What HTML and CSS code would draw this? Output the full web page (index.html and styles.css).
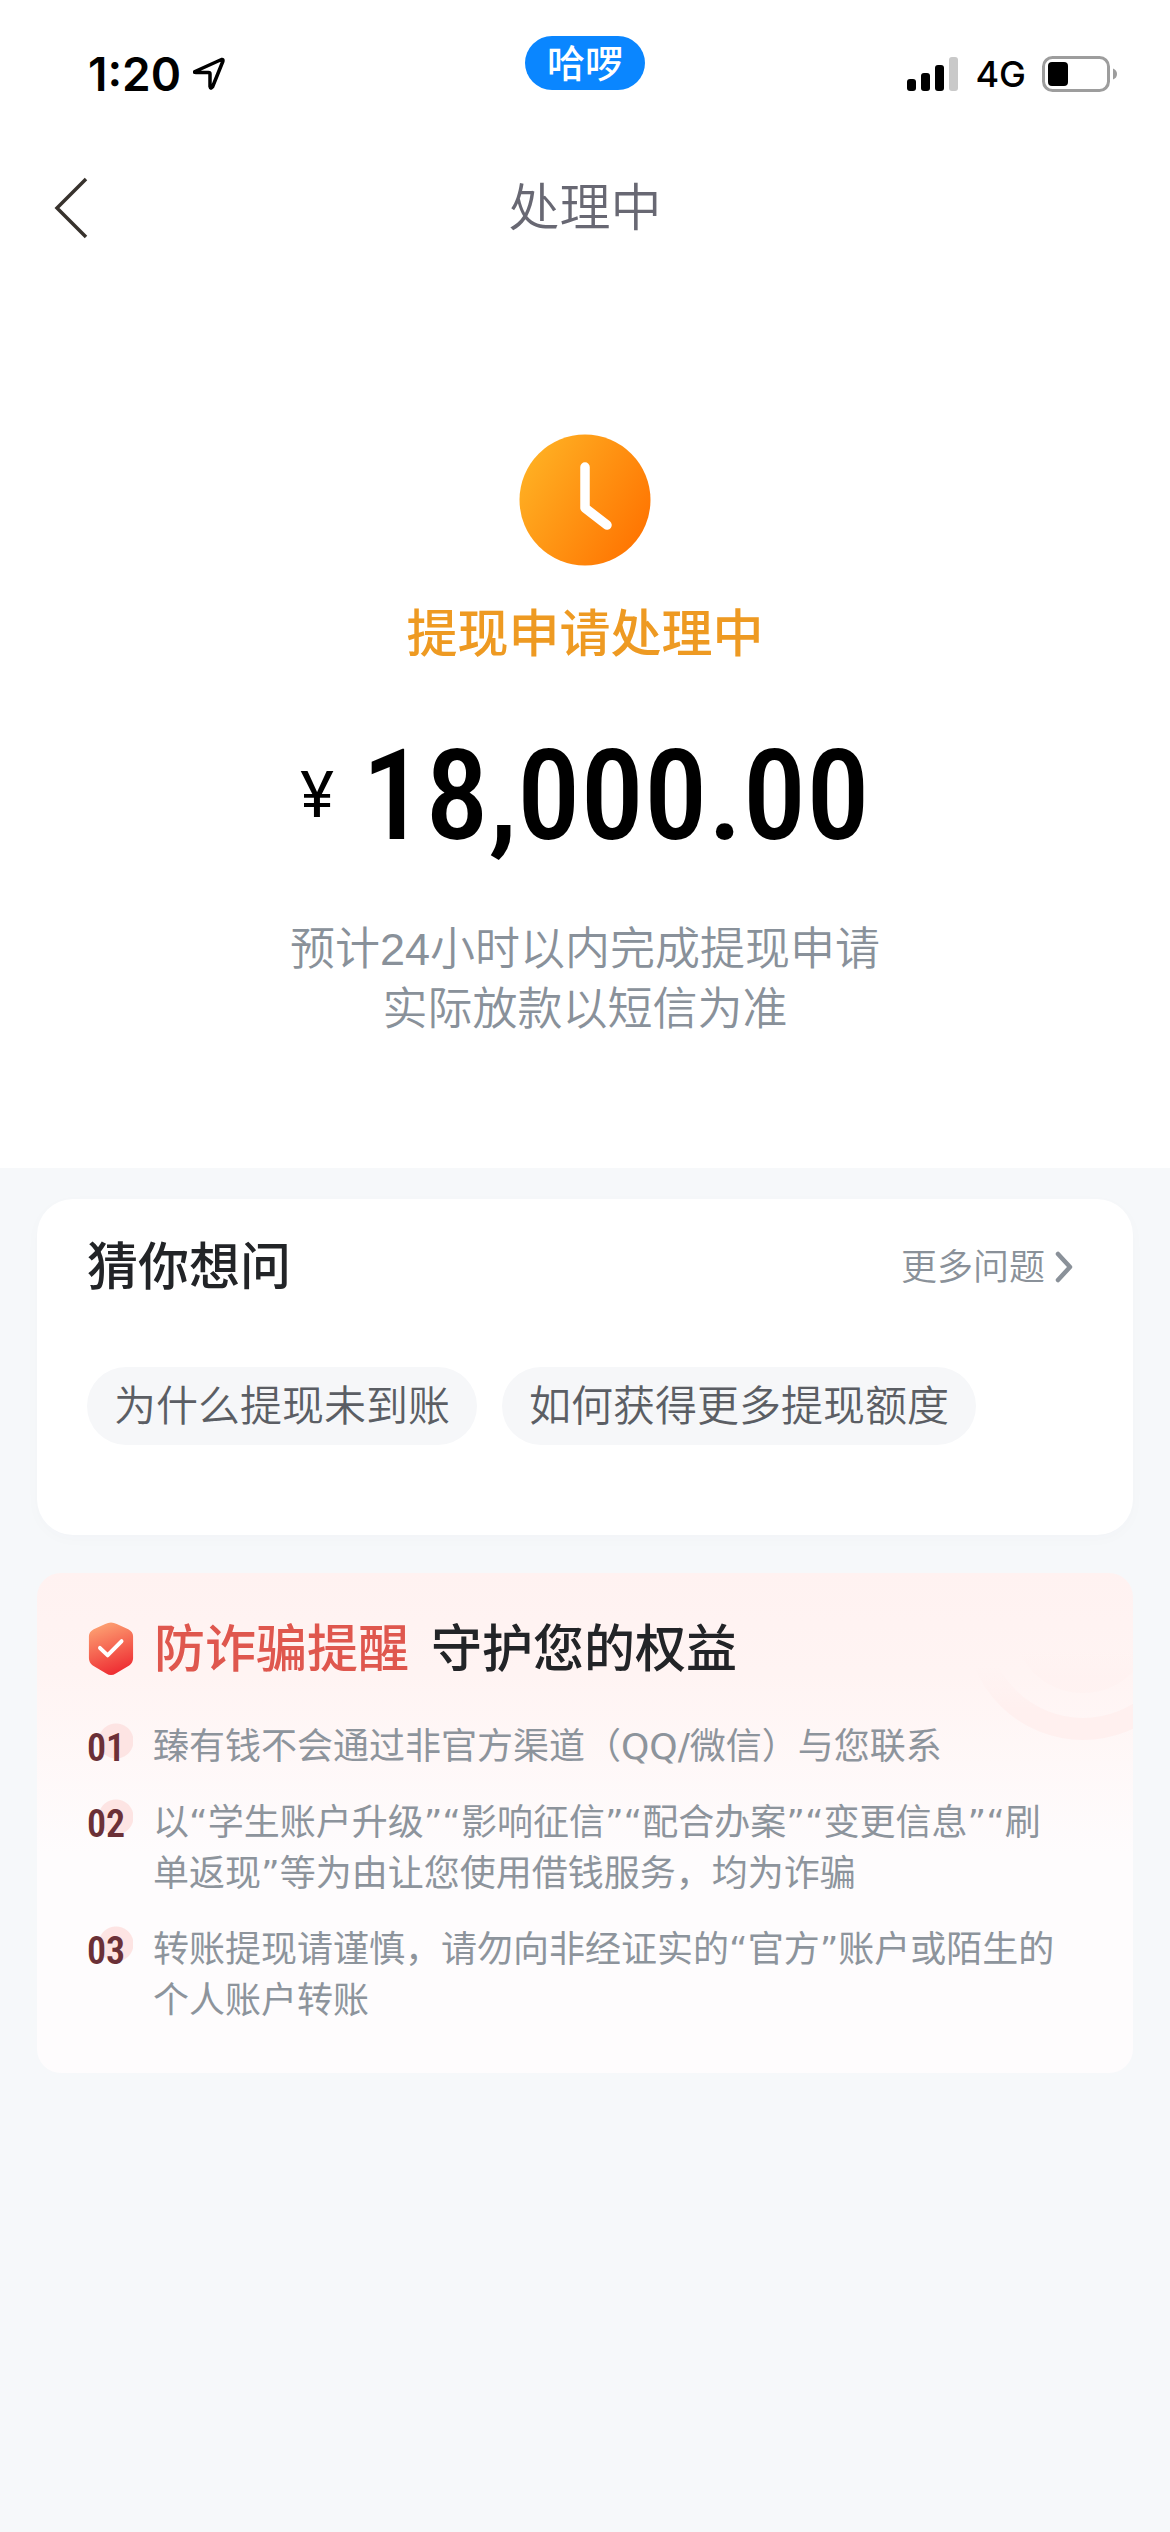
FILE: index.html
```html
<!DOCTYPE html>
<html lang="zh-CN">
<head>
<meta charset="utf-8">
<meta name="viewport" content="width=device-width, initial-scale=1">
<title>处理中</title>
<link rel="stylesheet" href="styles.css">
</head>
<body>
<div class="status-bar">
  <div class="status-left">
    <span class="clock">1:20</span>
    <svg width="32" height="34" viewBox="0 0 32 34" aria-hidden="true"><path d="M2 14.500 28.500 2.500Q30.500 2 29.800 4.500L19.500 30Q17.500 32.500 17 29.500V17Q17 15.500 15.500 15.500H3Q0.500 15.500 2 14.500Z" fill="none" stroke="#000" stroke-width="3.500" stroke-linejoin="round"/></svg>
  </div>
  <span class="app-pill">哈啰</span>
  <div class="status-right">
    <svg width="52" height="34" viewBox="0 0 52 34" aria-hidden="true"><rect y="22" width="9" height="12" rx="3"/><rect x="14" y="16" width="9" height="18" rx="3"/><rect x="28" y="8" width="9" height="26" rx="3"/><rect x="42" width="9" height="34" rx="3" fill="#c9c9c9"/></svg>
    <span class="network">4G</span>
    <svg width="76" height="36" viewBox="0 0 76 36" aria-hidden="true"><rect x="1.500" y="1.500" width="65" height="33" rx="9" fill="none" stroke="#9d9d9d" stroke-width="3"/><rect x="6" y="6" width="20" height="24" rx="4"/><path d="M71 12.500Q75 14 75 18T71 23.500Z" fill="#9d9d9d"/></svg>
  </div>
</div>

<header class="nav">
  <button class="back" type="button" aria-label="返回">
    <svg width="34" height="62" viewBox="0 0 34 62" aria-hidden="true"><path d="M32 2 3 31 32 60" fill="none" stroke="#37322d" stroke-width="3.500"/></svg>
  </button>
  <h1 class="nav-title">处理中</h1>
</header>

<section class="result">
  <svg width="132" height="132" viewBox="0 0 132 132" aria-hidden="true">
    <defs><linearGradient id="sun" x1="0" y1="0.200" x2="1" y2="0.800"><stop offset="0" stop-color="#ffb224"/><stop offset="1" stop-color="#ff7200"/></linearGradient></defs>
    <circle cx="66" cy="66" r="65.500" fill="url(#sun)"/>
    <path d="M66 33V74L88 91" fill="none" stroke="#fff" stroke-width="9.500" stroke-linecap="round" stroke-linejoin="round"/>
  </svg>
  <p class="state">提现申请处理中</p>
  <p class="amount"><span class="currency">¥</span><span class="value">18,000.00</span></p>
  <p class="note">预计24小时以内完成提现申请<br>实际放款以短信为准</p>
</section>

<main class="content">
  <section class="card">
    <div class="card-head">
      <h2 class="card-title">猜你想问</h2>
      <a class="more" href="#">更多问题<svg width="18" height="32" viewBox="0 0 18 32" aria-hidden="true"><path d="M3 3 15 16 3 29" fill="none" stroke="#8a9199" stroke-width="4.500" stroke-linecap="round" stroke-linejoin="round"/></svg></a>
    </div>
    <div class="chips">
      <button class="chip" type="button">为什么提现未到账</button>
      <button class="chip" type="button">如何获得更多提现额度</button>
    </div>
  </section>

  <section class="warning">
    <svg class="warning-art" width="160" height="180" viewBox="0 0 160 180" aria-hidden="true"><defs><linearGradient id="fade" x1="0" y1="0" x2="0" y2="1"><stop offset="0.700" stop-color="#fff0ef" stop-opacity="0"/><stop offset="0.900" stop-color="#fff0ef"/></linearGradient></defs><circle cx="110" cy="50" r="106" fill="none" stroke="url(#fade)" stroke-width="22"/><circle cx="110" cy="50" r="70" fill="url(#fade)" opacity="0.500"/></svg>
    <div class="warning-head">
      <svg width="48" height="54" viewBox="0 0 50 52" preserveAspectRatio="none" aria-hidden="true">
        <defs><linearGradient id="shield" x1="0.300" y1="0" x2="0.600" y2="1"><stop offset="0" stop-color="#fda273"/><stop offset="1" stop-color="#ee2a31"/></linearGradient></defs>
        <path d="M19 2Q25-1 31 2L43 7Q48 9.500 48 14V35Q48 39 44 42L30 49.500Q25 52.500 20 49.500L6 42Q2 39 2 35V14Q2 9.500 7 7Z" fill="url(#shield)"/>
        <path d="M13.500 25 21.500 32 36 18.500" fill="none" stroke="#fff" stroke-width="4" stroke-linecap="round" stroke-linejoin="round"/>
      </svg>
      <h2 class="warning-title"><em>防诈骗提醒</em><span>守护您的权益</span></h2>
    </div>
    <ol class="tips">
      <li class="tip"><span class="num">01</span><p>臻有钱不会通过非官方渠道（QQ/微信）与您联系</p></li>
      <li class="tip"><span class="num">02</span><p>以“学生账户升级”“影响征信”“配合办案”“变更信息”“刷单返现”等为由让您使用借钱服务，均为诈骗</p></li>
      <li class="tip"><span class="num">03</span><p>转账提现请谨慎，请勿向非经证实的“官方”账户或陌生的个人账户转账</p></li>
    </ol>
  </section>
</main>
</body>
</html>
```
FILE: styles.css
```css
* { box-sizing: border-box; margin: 0; padding: 0; }
body {
  min-height: 100vh;
  display: flex;
  flex-direction: column;
  background: #fff;
  color: #222427;
  font-family: Inter, "Noto Sans CJK SC", sans-serif;
}
svg { display: block; flex: none; }
button { border: 0; background: none; font: inherit; color: inherit; }

.status-bar {
  display: grid;
  grid-template-columns: 1fr 120px 1fr;
  padding: 36px 52px 0 88px;
  height: 128px;
}
.status-left, .status-right { display: flex; align-items: center; height: 76px; }
.status-left { gap: 12px; }
.clock { font-size: 46px; font-weight: 600; color: #000; }
.app-pill {
  height: 54px;
  margin-left: -18px;
  margin-right: 18px;
  border-radius: 27px;
  background: #0a86ff;
  color: #fff;
  font-size: 38px;
  font-weight: 500;
  line-height: 54px;
  text-align: center;
}
.status-right { justify-content: flex-end; gap: 16px; }
.network { font-size: 36px; font-weight: 500; color: #000; }

.nav {
  display: grid;
  grid-template-columns: 1fr auto 1fr;
  align-items: center;
  height: 160px;
  padding: 0 54px;
}
.back { justify-self: start; }
.nav-title { font-size: 51px; line-height: 72px; font-weight: 350; color: #686873; }

.result {
  display: flex;
  flex-direction: column;
  align-items: center;
  padding: 146px 0 128px;
}
.state { margin-top: 32px; font-size: 51px; line-height: 72px; font-weight: 500; color: #ee9a22; }
.amount { display: flex; align-items: center; gap: 28px; margin-top: 60px; color: #000; line-height: 132px; }
.currency { font-family: Roboto, sans-serif; font-size: 64px; font-weight: 400; }
.value { font-family: "Roboto Condensed", Roboto, sans-serif; font-size: 127px; font-weight: 500; }
.note { margin-top: 58px; font-family: "Liberation Sans", "Noto Sans CJK SC", sans-serif; font-size: 45px; line-height: 60px; font-weight: 350; color: #89919a; text-align: center; }

.content {
  flex: 1;
  display: flex;
  flex-direction: column;
  gap: 38px;
  padding: 31px 37px 60px;
  background: #f6f8fa;
}
.card { padding: 32px 50px 90px; border-radius: 36px; background: #fff; box-shadow: 0 4px 16px rgba(40, 60, 90, 0.02); }
.card-head { display: flex; justify-content: space-between; align-items: center; }
.card-title { font-size: 51px; line-height: 72px; font-weight: 500; }
.more { display: flex; align-items: center; gap: 10px; padding-right: 10px; font-size: 36px; line-height: 48px; font-weight: 350; color: #8a9199; text-decoration: none; }
.chips { display: flex; flex-wrap: wrap; gap: 25px; margin-top: 64px; }
.chip { height: 78px; padding: 0 27px; border-radius: 39px; background: #f6f7f9; color: #5b5e64; font-size: 42px; font-weight: 350; line-height: 78px; }

.warning {
  position: relative;
  overflow: hidden;
  padding: 40px 50px 47px;
  border-radius: 24px;
  background: linear-gradient(#fff2f1 0, #fff4f3 20%, #fefcfd 56%);
}
.warning-art { position: absolute; top: 0; right: 0; }
.warning-head { position: relative; display: flex; align-items: center; gap: 19px; }
.warning-title { display: flex; gap: 22px; font-size: 51px; line-height: 72px; font-weight: 500; }
.warning-title em { font-style: normal; color: #df574e; }
.tips { position: relative; display: flex; flex-direction: column; gap: 25px; margin-top: 36px; list-style: none; }
.tip {
  display: grid;
  grid-template-columns: 46px 1fr;
  align-items: start;
  column-gap: 20px;
  padding-right: 24px;
  color: #8d949c;
  font-family: "DejaVu Sans", "Noto Sans CJK SC", sans-serif;
  font-size: 36px;
  font-weight: 400;
  line-height: 51px;
}
.num {
  padding-top: 4px;
  font-family: "Roboto Condensed", Roboto, sans-serif;
  font-size: 38px;
  font-weight: 600;
  line-height: 47px;
  color: #6b3037;
  background: radial-gradient(circle at 29px 20px, #fde4e3 17px, transparent 18px);
}
```
